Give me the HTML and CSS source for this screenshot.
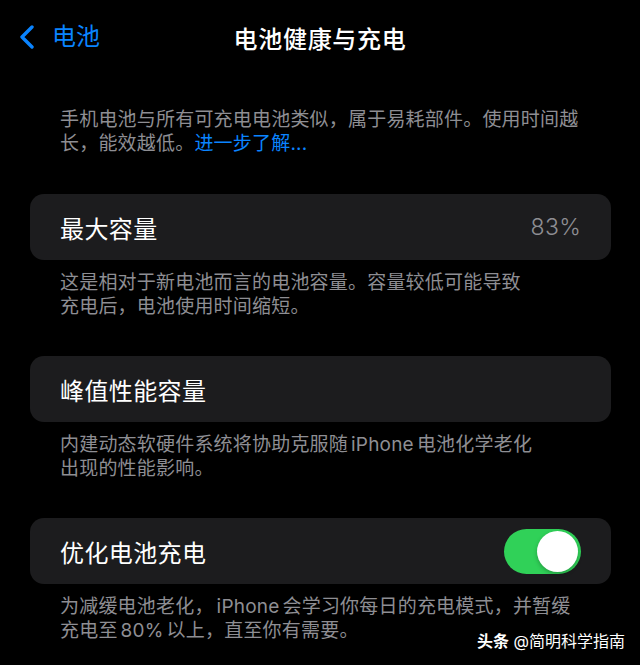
FILE: index.html
```html
<!DOCTYPE html>
<html lang="zh-CN">
<head>
    <meta charset="UTF-8">
    <meta name="viewport" content="width=device-width, initial-scale=1.0">
    <title>电池健康与充电</title>
    <link rel="stylesheet" href="styles.css">
</head>
<body>
    <div class="screen">
        <header class="nav">
            <a class="nav-back" href="#">
                <svg class="chevron" width="16" height="24" viewBox="0 0 16 24">
                    <path d="M13 2 L3 12 L13 22" fill="none" stroke="currentColor" stroke-width="3.4" stroke-linecap="round" stroke-linejoin="round"/>
                </svg>
                <span>电池</span>
            </a>
            <h1 class="nav-title">电池健康与充电</h1>
        </header>

        <p class="note intro">手机电池与所有可充电电池类似，属于易耗部件。使用时间越<br>长，能效越低。<a class="link" href="#">进一步了解...</a></p>

        <div class="card">
            <span class="label">最大容量</span>
            <span class="value">83%</span>
        </div>
        <p class="note">这是相对于新电池而言的电池容量。容量较低可能导致<br>充电后，电池使用时间缩短。</p>

        <div class="card">
            <span class="label">峰值性能容量</span>
        </div>
        <p class="note">内建动态软硬件系统将协助克服随<span class="latin">iPhone</span>电池化学老化<br>出现的性能影响。</p>

        <div class="card">
            <span class="label">优化电池充电</span>
            <span class="switch on"><span class="knob"></span></span>
        </div>
        <p class="note">为减缓电池老化，<span class="latin">iPhone</span>会学习你每日的充电模式，并暂缓<br>充电至<span class="latin">80%</span>以上，直至你有需要。</p>

        <div class="watermark"><b>头条</b> @简明科学指南</div>
    </div>
</body>
</html>
```

FILE: styles.css
```css
body {
    margin: 0;
    background: #000;
    color: #fff;
    font-family: Inter, "Noto Sans CJK SC", sans-serif;
}
.screen {
    position: relative;
    width: 640px;
    height: 665px;
    overflow: hidden;
}

/* top bar */
.nav {
    position: relative;
    height: 74px;
    display: flex;
    align-items: center;
    justify-content: center;
}
.nav-back {
    position: absolute;
    left: 19px;
    top: 25px;
    display: flex;
    align-items: center;
    gap: 17px;
    color: #0a84ff;
    text-decoration: none;
    font-size: 24px;
    line-height: 24px;
}
.chevron {
    display: block;
}
.nav-title {
    margin: 0;
    font-size: 24px;
    font-weight: 500;
    letter-spacing: 0.7px;
}

/* grouped rows */
.card {
    display: flex;
    align-items: center;
    justify-content: space-between;
    height: 66px;
    margin: 38px 29px 0 30px;
    padding: 0 30px;
    background: #1c1c1e;
    border-radius: 14px;
}
.intro + .card {
    margin-top: 39px;
}
.label {
    font-size: 24px;
    letter-spacing: 0.4px;
}
.value {
    font-size: 23px;
    font-weight: 300;
    color: #8e8e93;
    letter-spacing: 0.3px;
}

/* footnotes */
.note {
    margin: 11px 30px 0 60px;
    font-size: 19px;
    line-height: 23.5px;
    letter-spacing: 0.2px;
    color: #8e8e93;
    white-space: nowrap;
}
.latin {
    margin: 0 3px;
}
.intro {
    margin-top: 34px;
}
.link {
    color: #0a84ff;
    text-decoration: none;
}

/* toggle */
.switch {
    position: relative;
    width: 77px;
    height: 45px;
    border-radius: 23px;
    background: #787880;
}
.switch.on {
    background: #30d158;
}
.knob {
    position: absolute;
    top: 2px;
    right: 3px;
    width: 41px;
    height: 41px;
    border-radius: 50%;
    background: #fff;
    box-shadow: 0 2px 4px rgba(0,0,0,0.25);
}

.watermark {
    position: absolute;
    right: 15px;
    bottom: 13px;
    font-size: 16px;
    color: #fff;
    text-shadow: 0 0 2px rgba(0,0,0,0.6);
}
.watermark b {
    font-weight: 700;
}
```
